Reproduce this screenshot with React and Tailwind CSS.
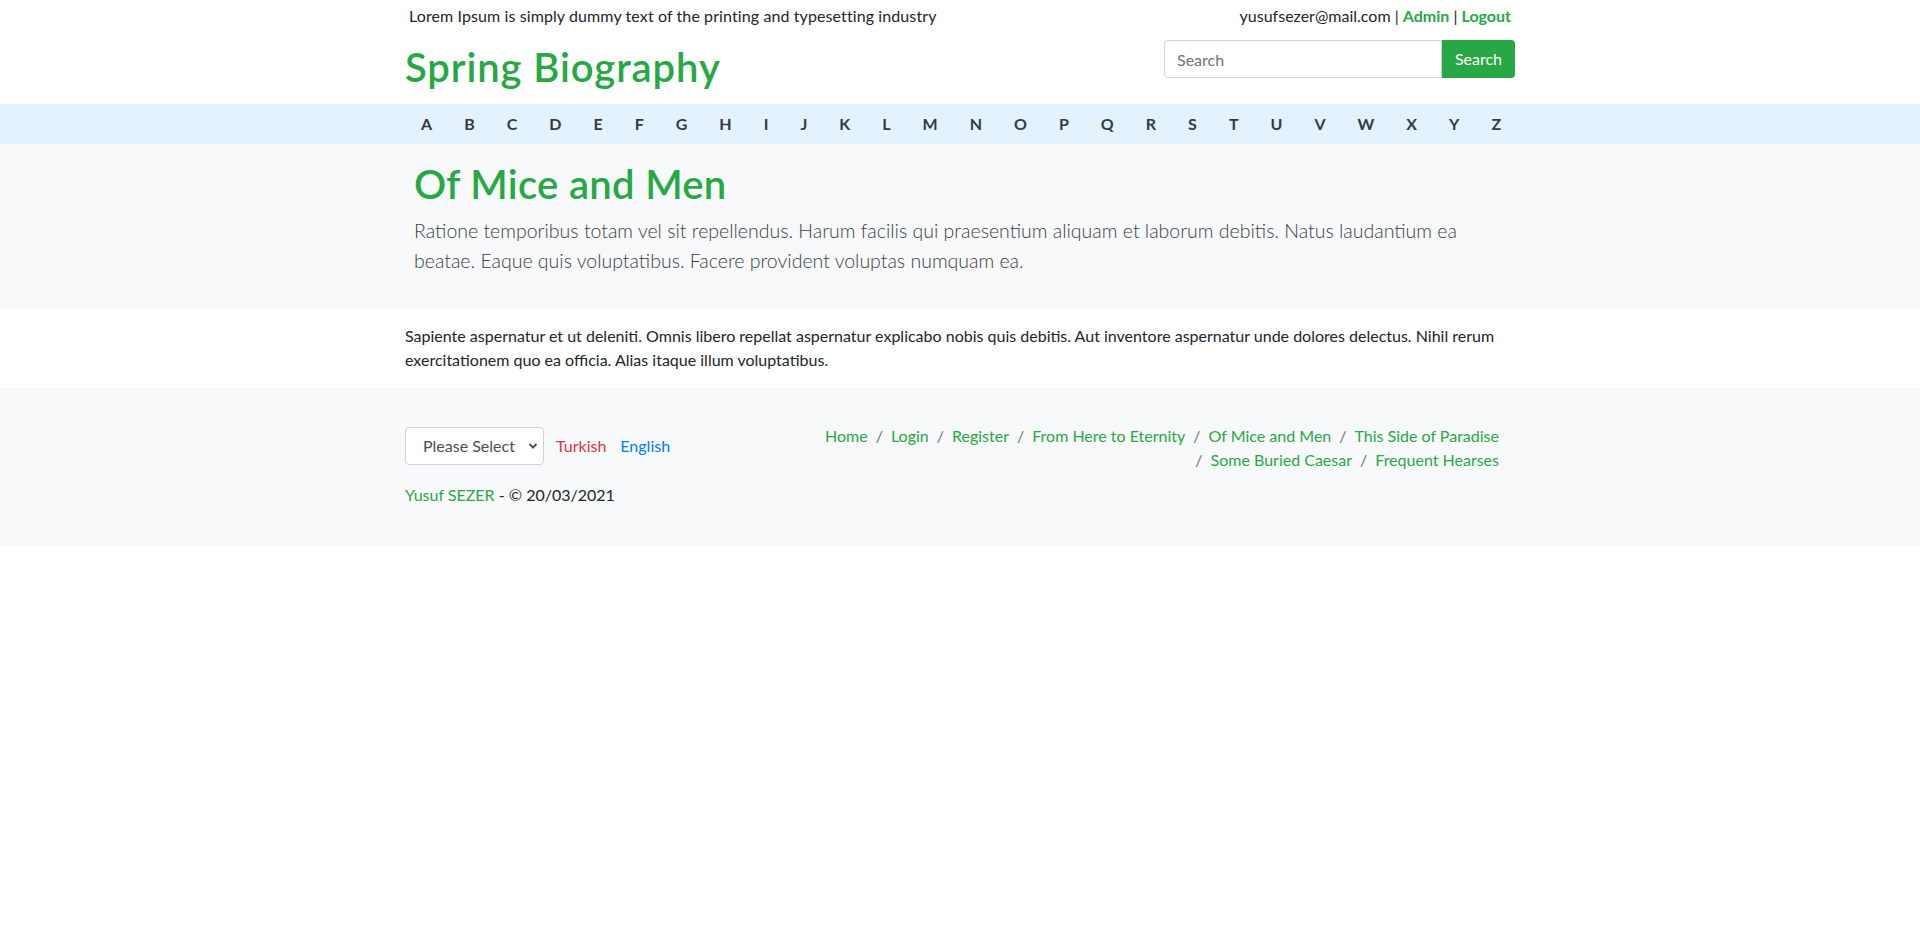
import { useState } from "react";

const letters = "ABCDEFGHIJKLMNOPQRSTUVWXYZ".split("");

const crumbs = [
  "Home",
  "Login",
  "Register",
  "From Here to Eternity",
  "Of Mice and Men",
  "This Side of Paradise",
  "Some Buried Caesar",
  "Frequent Hearses",
];

function Header() {
  return (
    <header className="bg-white">
      <div className="w-[1140px] mx-auto px-[15px]">
        <div className="flex justify-between pt-1 px-1 leading-6 text-[16px]">
          <span className="tracking-[0.1px]">Lorem Ipsum is simply dummy text of the printing and typesetting industry</span>
          <span>
            yusufsezer@mail.com |{" "}
            <a href="#" className="font-bold text-[#28a745]">Admin</a> |{" "}
            <a href="#" className="font-bold text-[#28a745]">Logout</a>
          </span>
        </div>
        <div className="flex justify-between items-start pt-3 pb-[13px]">
          <h1 className="mt-[3px] text-[40px] leading-[1.2] font-semibold tracking-[0.9px] text-[#28a745]">Spring Biography</h1>
          <form className="flex" onSubmit={(e) => e.preventDefault()}>
            <input
              type="text"
              placeholder="Search"
              className="w-[278px] h-[38px] px-3 text-[16px] border border-[#ced4da] rounded-l-[4px] placeholder:text-[#6c757d] outline-none"
            />
            <button className="w-[73px] h-[38px] bg-[#28a745] text-white text-[16px] rounded-r-[4px]">Search</button>
          </form>
        </div>
      </div>
    </header>
  );
}

function LetterBar() {
  return (
    <nav className="bg-[#e3f2fd]">
      <div className="w-[1140px] mx-auto px-[15px] flex">
        {letters.map((l) => (
          <a key={l} href="#" className="px-4 py-2 leading-6 text-[16px] font-bold text-[#343a40]">
            {l}
          </a>
        ))}
      </div>
    </nav>
  );
}

function Footer() {
  const [lang, setLang] = useState("");
  return (
    <footer className="bg-[#f8f9fa] py-[39px]">
      <div className="w-[1140px] mx-auto px-[15px] flex justify-between items-start">
        <div className="flex flex-col">
          <div className="flex items-center">
            <div className="relative">
              <select
                value={lang}
                onChange={(e) => setLang(e.target.value)}
                className="appearance-none w-[139px] h-[38px] pl-[17px] pr-6 text-[16px] text-[#495057] bg-white border border-[#ced4da] rounded-[4px]"
              >
                <option value="">Please Select</option>
                <option value="tr">Turkish</option>
                <option value="en">English</option>
              </select>
              <svg className="absolute right-[6px] top-[15px] pointer-events-none" width="10" height="8" viewBox="0 0 10 8">
                <path d="M1.5 2 L5 5.5 L8.5 2" fill="none" stroke="#495057" strokeWidth="2" />
              </svg>
            </div>
            <a href="#" className="ml-3 text-[#dc3545] text-[16px]">Turkish</a>
            <a href="#" className="ml-[14px] text-[#007bff] text-[16px]">English</a>
          </div>
          <p className="mt-[18px] leading-6 text-[16px]">
            <a href="#" className="text-[#28a745]">Yusuf SEZER</a> - © 20/03/2021
          </p>
        </div>
        <ol className="w-[730px] -mt-[3px] px-4 flex flex-wrap justify-end leading-6 text-[16px]">
          {crumbs.map((c, i) => (
            <li key={c} className={i === 0 ? "" : "pl-2"}>
              {i > 0 && <span className="pr-2 text-[#6c757d]">/</span>}
              <a href="#" className="text-[#28a745]">{c}</a>
            </li>
          ))}
        </ol>
      </div>
    </footer>
  );
}

export default function App() {
  return (
    <div className="min-h-screen bg-white text-[#212529] font-['Segoe_UI','Lato','Noto_Sans',sans-serif]">
      <Header />
      <LetterBar />
      <section className="bg-[#f8f9fa] pt-4 pb-[17px]">
        <div className="w-[1140px] mx-auto px-[24px]">
          <h1 className="text-[40px] leading-[1.2] font-semibold tracking-[0.3px] text-[#28a745] mb-2">Of Mice and Men</h1>
          <p className="text-[19.5px] leading-[30px] font-light text-[#3a4047] mb-4">
            Ratione temporibus totam vel sit repellendus. Harum facilis qui praesentium aliquam et laborum debitis. Natus
            laudantium ea beatae. Eaque quis voluptatibus. Facere provident voluptas numquam ea.
          </p>
        </div>
      </section>
      <section className="w-[1140px] mx-auto px-[15px] pt-[15px] pb-[16px]">
        <p className="leading-6 text-[16px]">
          Sapiente aspernatur et ut deleniti. Omnis libero repellat aspernatur explicabo nobis quis debitis. Aut inventore
          aspernatur unde dolores delectus. Nihil rerum exercitationem quo ea officia. Alias itaque illum voluptatibus.
        </p>
      </section>
      <Footer />
    </div>
  );
}
